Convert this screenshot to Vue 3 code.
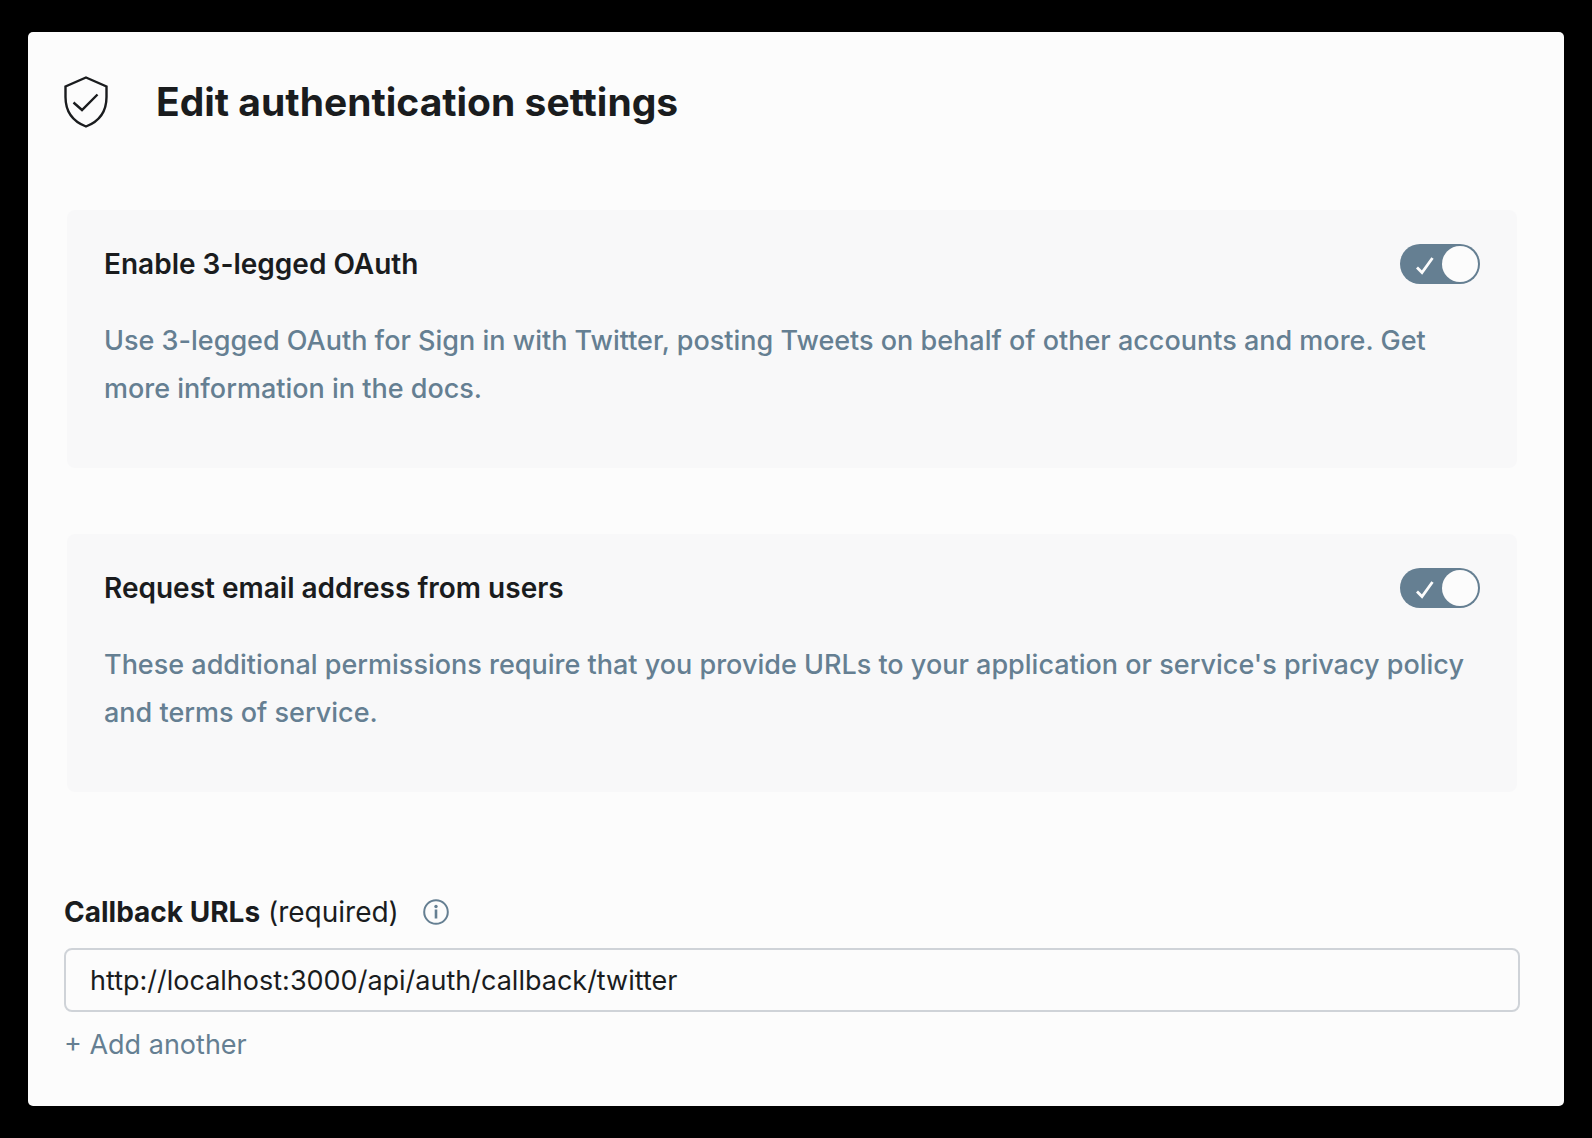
<script setup>
import { ref } from 'vue'

const settings = ref([
  {
    id: 'oauth',
    title: 'Enable 3-legged OAuth',
    text: 'Use 3-legged OAuth for Sign in with Twitter, posting Tweets on behalf of other accounts and more. Get more information in the docs.',
    enabled: true,
  },
  {
    id: 'email',
    title: 'Request email address from users',
    text: "These additional permissions require that you provide URLs to your application or service's privacy policy and terms of service.",
    enabled: true,
  },
])

const urls = ref(['http://localhost:3000/api/auth/callback/twitter'])
</script>

<template>
  <main class="panel">
    <header class="header">
      <svg class="shield" viewBox="0 0 44 52" fill="none" stroke="currentColor" stroke-width="2.4" aria-hidden="true">
        <path d="M22 1.5 42.5 10.5V21C42.5 37 35 45.5 22 50.5 9 45.5 1.5 37 1.5 21V10.5Z" />
        <path d="M9.5 26.5 18 34 33.5 18.5" />
      </svg>
      <h1 class="heading">Edit authentication settings</h1>
    </header>

    <section class="cards">
      <article v-for="item in settings" :key="item.id" class="card">
        <div class="card-head">
          <label class="card-title" :for="item.id">{{ item.title }}</label>
          <span class="toggle">
            <input :id="item.id" v-model="item.enabled" class="toggle-input" type="checkbox" role="switch" />
            <svg v-if="item.enabled" class="tick" viewBox="0 0 18 18" fill="none" stroke="#fcfcfc" stroke-width="2.8" aria-hidden="true">
              <path d="M1 10.5 6 15.5 16.5 1" />
            </svg>
          </span>
        </div>
        <p class="card-text">{{ item.text }}</p>
      </article>
    </section>

    <section class="callbacks">
      <div class="field-head">
        <label for="callback-0"><strong>Callback URLs</strong> (required)</label>
        <button class="info" type="button" aria-label="About callback URLs">
          <svg viewBox="0 0 26 26" fill="none" stroke="currentColor" stroke-width="2" aria-hidden="true">
            <circle cx="13" cy="13" r="11.8" />
            <path d="M13 10.5V19.5" stroke-width="2.6" />
            <circle cx="13" cy="7.5" r="1.7" fill="currentColor" stroke="none" />
          </svg>
        </button>
      </div>
      <input
        v-for="(url, i) in urls"
        :id="`callback-${i}`"
        :key="i"
        v-model="urls[i]"
        class="field"
        type="text"
        spellcheck="false"
      />
      <button class="add" type="button" @click="urls.push('')">+ Add another</button>
    </section>
  </main>
</template>

<style>
body {
  background: #000;
}
</style>

<style scoped>
.panel {
  box-sizing: border-box;
  margin: 32px 28px;
  padding: 40px 44px 37px 36px;
  border-radius: 5px;
  background: #fcfcfc;
  color: #1a1c1e;
  font-family: Inter, "Liberation Sans", sans-serif;
  font-size: 27px;
  line-height: 48px;
}

.header {
  display: flex;
  align-items: center;
  gap: 48px;
  height: 60px;
}

.shield {
  width: 44px;
  height: 52px;
}

.heading {
  margin: 0;
  font-size: 39px;
  font-weight: 700;
}

.cards {
  display: flex;
  flex-direction: column;
  gap: 66px;
  margin: 78px 3px 0;
}

.card {
  padding: 34px 37px 55px;
  border-radius: 8px;
  background: #f8f8f9;
}

.card-head {
  display: flex;
  align-items: center;
  justify-content: space-between;
  height: 40px;
}

.card-title {
  font-size: 28px;
  font-weight: 600;
}

.card-text {
  margin: 33px 0 0;
  color: #657f92;
  font-weight: 500;
}

.toggle {
  position: relative;
  display: flex;
}

.toggle-input {
  display: flex;
  width: 80px;
  height: 40px;
  margin: 0;
  padding: 2px;
  box-sizing: border-box;
  border-radius: 20px;
  background: #cfd3d8;
  appearance: none;
  cursor: pointer;
}

.toggle-input::before {
  content: "";
  width: 36px;
  height: 36px;
  border-radius: 50%;
  background: #fcfcfc;
}

.toggle-input:checked {
  justify-content: flex-end;
  background: #657f92;
}

.tick {
  position: absolute;
  top: 13px;
  left: 16px;
  width: 18px;
  height: 18px;
  pointer-events: none;
}

.callbacks {
  display: flex;
  flex-direction: column;
  align-items: flex-start;
  margin-top: 96px;
}

.field-head {
  display: flex;
  align-items: center;
  gap: 24px;
  font-size: 28px;
}

.info {
  display: flex;
  width: 26px;
  height: 26px;
  padding: 0;
  border: 0;
  background: none;
  color: #657f92;
}

.field {
  box-sizing: border-box;
  width: 100%;
  height: 64px;
  margin-top: 12px;
  padding: 0 24px;
  border: 2px solid #cfd3d8;
  border-radius: 8px;
  background: #fcfcfc;
  color: inherit;
  font: inherit;
}

.add {
  margin-top: 9px;
  padding: 0;
  border: 0;
  background: none;
  color: #657f92;
  font: inherit;
}
</style>
